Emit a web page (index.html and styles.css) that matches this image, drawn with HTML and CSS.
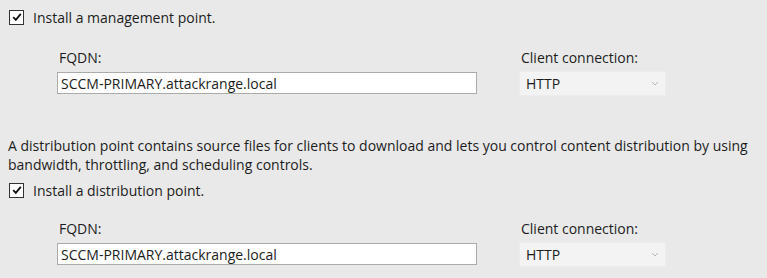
FILE: index.html
```html
<!DOCTYPE html>
<html lang="en">
<head>
    <meta charset="UTF-8">
    <title>Site System Roles</title>
    <link rel="stylesheet" href="styles.css">
</head>
<body>
    <div class="page">
        <label class="check-row">
            <span class="box">
                <svg viewBox="0 0 12 12" width="12" height="12"><path d="M2.2 6.2 L4.8 8.8 L9.8 2.8" fill="none" stroke="#111" stroke-width="1.8"/></svg>
            </span>
            <span>Install a management point.</span>
        </label>
        <div class="fields">
            <div class="field fqdn">
                <div class="label">FQDN:</div>
                <input class="textbox" type="text" value="SCCM-PRIMARY.attackrange.local">
            </div>
            <div class="field conn">
                <div class="label">Client connection:</div>
                <div class="select">
                    <span>HTTP</span>
                    <svg viewBox="0 0 8 5" width="8" height="5"><path d="M1 1 L4 4 L7 1" fill="none" stroke="#b8b8b8" stroke-width="1"/></svg>
                </div>
            </div>
        </div>

        <p class="desc">A distribution point contains source files for clients to download and lets you control content distribution by using bandwidth, throttling, and scheduling controls.</p>

        <label class="check-row">
            <span class="box">
                <svg viewBox="0 0 12 12" width="12" height="12"><path d="M2.2 6.2 L4.8 8.8 L9.8 2.8" fill="none" stroke="#111" stroke-width="1.8"/></svg>
            </span>
            <span>Install a distribution point.</span>
        </label>
        <div class="fields second">
            <div class="field fqdn">
                <div class="label">FQDN:</div>
                <input class="textbox" type="text" value="SCCM-PRIMARY.attackrange.local">
            </div>
            <div class="field conn">
                <div class="label">Client connection:</div>
                <div class="select">
                    <span>HTTP</span>
                    <svg viewBox="0 0 8 5" width="8" height="5"><path d="M1 1 L4 4 L7 1" fill="none" stroke="#b8b8b8" stroke-width="1"/></svg>
                </div>
            </div>
        </div>
    </div>
</body>
</html>
```

FILE: styles.css
```css
body {
    margin: 0;
    background: #e9e9e9;
    font-family: "Open Sans", "Noto Sans", sans-serif;
    font-size: 14px;
    color: #1c1c1c;
}

.page {
    padding: 7px 0 0 8px;
}

.check-row {
    display: flex;
    align-items: center;
    gap: 9px;
    height: 20px;
}

.check-row .box {
    width: 13px;
    height: 13px;
    margin-left: 1px;
    border: 1px solid #333;
    background: #fff;
    display: flex;
    align-items: center;
    justify-content: center;
}

.fields {
    display: flex;
    gap: 42px;
    margin: 23px 0 0 49px;
}

.fields.second {
    margin-top: 21px;
}

.field .label {
    height: 16px;
    line-height: 16px;
    padding-left: 2px;
    margin-bottom: 6px;
}

.field.conn .label {
    margin-bottom: 5px;
}

.textbox {
    width: 420px;
    height: 22px;
    box-sizing: border-box;
    border: 1px solid #ababab;
    background: #fff;
    padding: 0 3px;
    font-family: inherit;
    font-size: 14px;
    color: #1c1c1c;
    outline: none;
}

.select {
    width: 147px;
    height: 25px;
    box-sizing: border-box;
    background: #f3f3f3;
    border: 1px solid #ececec;
    display: flex;
    align-items: center;
    justify-content: space-between;
    padding: 0 6px 0 6px;
}

.desc {
    margin: 40px 0 6px 0;
    line-height: 19px;
}
```
